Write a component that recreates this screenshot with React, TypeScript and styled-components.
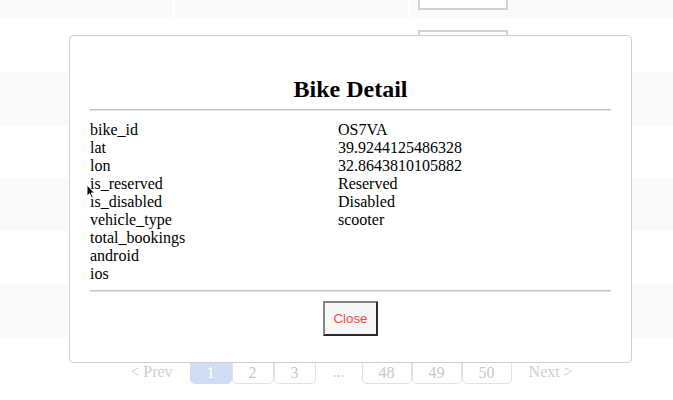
import React from "react";
import styled, { createGlobalStyle } from "styled-components";

const GlobalStyle = createGlobalStyle`
  html, body { margin: 0; padding: 0; background: #ffffff; }
  body { font-family: "Liberation Serif", "Times New Roman", serif; font-size: 16px; color: #000; }
  * { box-sizing: border-box; }
`;

const Page = styled.div`
  position: relative;
  width: 673px;
  height: 400px;
  overflow: hidden;
  background: #ffffff;
`;

const Table = styled.div`
  display: flex;
  flex-direction: column;
`;

const Row = styled.div<{ $height: number; $partial?: boolean }>`
  display: flex;
  gap: 2px;
  height: ${(p) => p.$height}px;
  overflow: hidden;
`;

const Cell = styled.div<{ $striped: boolean; $width?: number; $partial?: boolean }>`
  ${(p) => (p.$width ? `width: ${p.$width}px;` : "flex: 1;")}
  flex-shrink: 0;
  background: ${(p) => (p.$striped ? "#fafafa" : "#ffffff")};
  display: flex;
  align-items: ${(p) => (p.$partial ? "flex-end" : "flex-start")};
  padding: ${(p) => (p.$partial ? "0 0 9px 8px" : "11px 0 0 8px")};
`;

const RowButton = styled.div`
  width: 90px;
  height: 33px;
  border: 2px solid #d2d2d2;
  background: #ffffff;
`;

const Pagination = styled.div`
  display: flex;
  justify-content: center;
  padding-left: 30px;
  margin-top: 16px;
  color: #cfcfcf;
`;

const PageText = styled.div`
  height: 31px;
  padding: 10px 17px 0;
  line-height: 18px;
  white-space: nowrap;
`;

const PageBox = styled.div<{ $active?: boolean }>`
  height: 31px;
  padding: 10px 16px 0;
  line-height: 18px;
  border: 1px solid ${(p) => (p.$active ? "#cfdcf4" : "#e2e2e2")};
  border-radius: 5px;
  background: ${(p) => (p.$active ? "#cfdcf4" : "#ffffff")};
  color: ${(p) => (p.$active ? "#ffffff" : "#c8c8c8")};
`;

const Modal = styled.div`
  position: absolute;
  left: 69px;
  top: 35px;
  width: 563px;
  height: 328px;
  background: #ffffff;
  border: 1px solid #cfcfcf;
  border-radius: 4px;
  padding: 0 20px;
  display: flex;
  flex-direction: column;
`;

const Title = styled.h2`
  margin: 39px 0 0;
  font-size: 24px;
  line-height: 28px;
  font-weight: bold;
  text-align: center;
`;

const Divider = styled.hr<{ $top: number }>`
  margin: ${(p) => p.$top}px 0 0;
  height: 0;
  border: none;
  border-top: 1px solid #c4c4c4;
  border-bottom: 1px solid #e2e2e2;
`;

const DetailGrid = styled.div`
  margin-top: 10px;
  display: grid;
  grid-template-columns: 248px 1fr;
  line-height: 18px;
  font-size: 16px;
`;

const Footer = styled.div`
  display: flex;
  justify-content: center;
  margin-top: 9px;
`;

const CloseButton = styled.button`
  height: 35px;
  padding: 0 8px;
  background: #f7f7f7;
  border: 2px solid;
  border-color: #858585 #2b2b2b #2b2b2b #858585;
  color: #ff4747;
  font-family: "Liberation Sans", Arial, sans-serif;
  font-size: 13.33px;
  cursor: pointer;
`;

const Cursor = styled.svg`
  position: absolute;
  left: 86px;
  top: 184px;
`;

const details: [string, string][] = [
  ["bike_id", "OS7VA"],
  ["lat", "39.9244125486328"],
  ["lon", "32.8643810105882"],
  ["is_reserved", "Reserved"],
  ["is_disabled", "Disabled"],
  ["vehicle_type", "scooter"],
  ["total_bookings", ""],
  ["android", ""],
  ["ios", ""],
];

const rows = [
  { height: 19, partial: true },
  { height: 53 },
  { height: 53 },
  { height: 53 },
  { height: 53 },
  { height: 53 },
  { height: 53 },
];

export default function App() {
  return (
    <>
      <GlobalStyle />
      <Page>
        <Table>
          {rows.map((r, i) => {
            const striped = i % 2 === 0;
            return (
              <Row key={i} $height={r.height}>
                <Cell $striped={striped} $width={173} />
                <Cell $striped={striped} $width={233} />
                <Cell $striped={striped} $partial={r.partial}>
                  <RowButton />
                </Cell>
              </Row>
            );
          })}
        </Table>
        <Pagination>
          <PageText>&lt; Prev</PageText>
          <PageBox $active>1</PageBox>
          <PageBox>2</PageBox>
          <PageBox>3</PageBox>
          <PageText>...</PageText>
          <PageBox>48</PageBox>
          <PageBox>49</PageBox>
          <PageBox>50</PageBox>
          <PageText>Next &gt;</PageText>
        </Pagination>

        <Modal>
          <Title>Bike Detail</Title>
          <Divider $top={6} />
          <DetailGrid>
            {details.map(([k, v]) => (
              <React.Fragment key={k}>
                <div>{k}</div>
                <div>{v}</div>
              </React.Fragment>
            ))}
          </DetailGrid>
          <Divider $top={7} />
          <Footer>
            <CloseButton>Close</CloseButton>
          </Footer>
        </Modal>

        <Cursor width="10" height="15" viewBox="0 0 10 15">
          <path d="M1 1 L1 12 L3.6 9.6 L5.4 13.6 L7 12.9 L5.3 9 L8.6 9 Z" fill="#000" stroke="#fff" strokeWidth="1" strokeLinejoin="round" />
        </Cursor>
      </Page>
    </>
  );
}
